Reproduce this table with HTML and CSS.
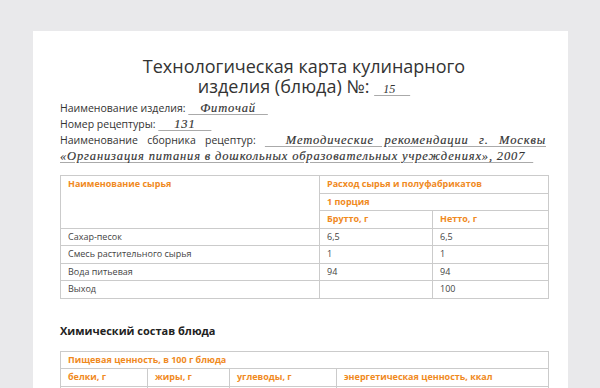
FILE: index.html
```html
<!DOCTYPE html>
<html lang="ru">
<head>
<meta charset="utf-8">
<link rel="stylesheet" href="styles.css">
</head>
<body>
<div class="page">
  <h1 class="title">Технологическая карта кулинарного<br>изделия (блюда) №: <span class="fill num">&nbsp;&nbsp;&nbsp;15&nbsp;&nbsp;&nbsp;&nbsp;&nbsp;</span></h1>
  <div class="fields">
    <p class="field">Наименование изделия: <span class="fill">&nbsp;&nbsp;&nbsp;Фиточай&nbsp;&nbsp;&nbsp;</span></p>
    <p class="field">Номер рецептуры: <span class="fill">&nbsp;&nbsp;&nbsp;&nbsp;131&nbsp;&nbsp;&nbsp;&nbsp;</span></p>
    <p class="field just">Наименование сборника рецептур: <span class="fill">&nbsp;&nbsp;Методические рекомендации г. Москвы «Организация питания в дошкольных образовательных учреждениях», 2007&nbsp;&nbsp;</span></p>
  </div>
  <table class="tbl t1">
    <colgroup><col class="c1"><col class="c2"><col class="c3"></colgroup>
    <tr><th rowspan="3" class="top">Наименование сырья</th><th colspan="2">Расход сырья и полуфабрикатов</th></tr>
    <tr><th colspan="2">1 порция</th></tr>
    <tr><th>Брутто, г</th><th>Нетто, г</th></tr>
    <tr><td>Сахар-песок</td><td>6,5</td><td>6,5</td></tr>
    <tr><td>Смесь растительного сырья</td><td>1</td><td>1</td></tr>
    <tr><td>Вода питьевая</td><td>94</td><td>94</td></tr>
    <tr><td>Выход</td><td></td><td>100</td></tr>
  </table>
  <h2 class="sub">Химический состав блюда</h2>
  <table class="tbl t2">
    <colgroup><col class="d1"><col class="d2"><col class="d3"><col class="d4"></colgroup>
    <tr><th colspan="4">Пищевая ценность, в 100 г блюда</th></tr>
    <tr><th>белки, г</th><th>жиры, г</th><th>углеводы, г</th><th>энергетическая ценность, ккал</th></tr>
    <tr><td>&nbsp;</td><td></td><td></td><td></td></tr>
  </table>
</div>
</body>
</html>
```
FILE: styles.css
```css
html, body { margin: 0; padding: 0; }
body {
  background: #e9e9eb;
  font-family: "Open Sans", "Noto Sans", sans-serif;
  color: #333;
  overflow: hidden;
  height: 388px;
}
.page {
  margin: 31px 32px 0 33px;
  background: #fff;
  padding: 25px 20px 40px 27px;
  height: 400px;
}
.title {
  margin: 0;
  font-weight: 400;
  font-size: 18px;
  line-height: 20px;
  text-align: center;
  color: #333;
}
.fill {
  font-family: "Liberation Serif", "DejaVu Serif", serif;
  font-style: italic;
  text-decoration: underline;
  text-decoration-color: #aaa;
  text-underline-offset: 2px;
  color: #333;
}
.title .num { font-size: 12px; }
.fields {
  margin-top: 1px;
  width: 486px;
}
.field {
  margin: 0;
  font-size: 10.5px;
  line-height: 16px;
}
.field .fill { font-size: 12.5px; font-weight: 400; letter-spacing: 0.85px; -webkit-text-stroke: 0.15px #333; }
.just { text-align: justify; }
.tbl {
  border-collapse: collapse;
  margin-top: 11px;
  width: 489px;
  table-layout: fixed;
}
.tbl th, .tbl td {
  border: 1px solid #cbcbcb;
  height: 16.5px;
  padding: 0 7px;
  text-align: left;
  font-size: 9px;
  line-height: 12px;
  vertical-align: middle;
}
.tbl th { color: #f08a1e; font-weight: 700; }
.tbl td { color: #444; }
.tbl th.top { vertical-align: top; padding-top: 2px; }
.c1 { width: 259px; }
.c2 { width: 113px; }
.c3 { width: 116px; }
.d1 { width: 87px; }
.d2 { width: 82px; }
.d3 { width: 107px; }
.d4 { width: 212px; }
.sub {
  margin: 25px 0 0;
  font-size: 11px;
  font-weight: 700;
  color: #222;
  line-height: 14px;
}
.t2 { margin-top: 13px; }
```
